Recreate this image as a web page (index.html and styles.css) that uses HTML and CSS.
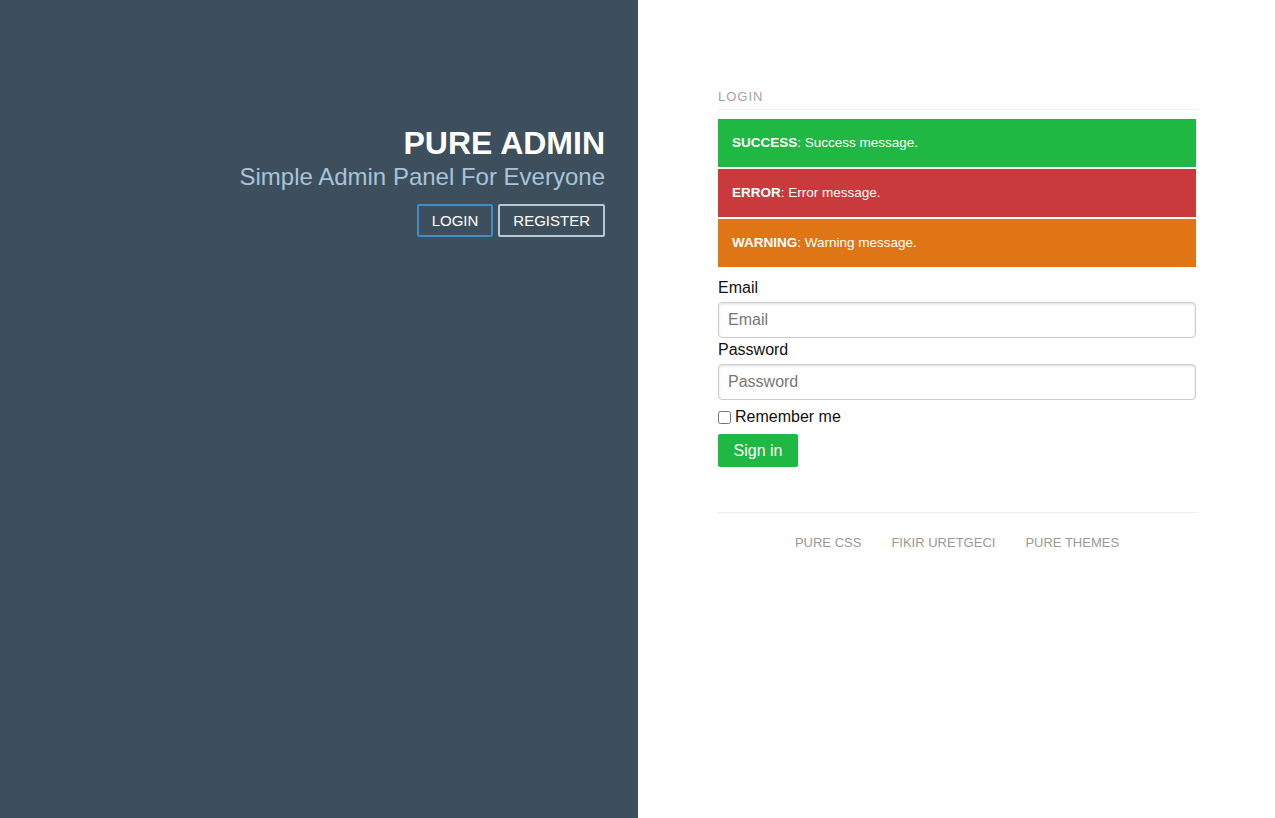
FILE: index.html
```html
<!DOCTYPE html>
<html>
<head>
<meta charset="utf-8">
<title>Pure Admin - Login</title>
<link rel="stylesheet" href="styles.css">
</head>
<body>
<div class="page">
  <div class="side">
    <div class="brand">
      <h1 class="brand-title">PURE ADMIN</h1>
      <h2 class="brand-sub">Simple Admin Panel For Everyone</h2>
      <div class="brand-actions">
        <a class="ghost-btn ghost-login" href="#">LOGIN</a>
        <a class="ghost-btn ghost-register" href="#">REGISTER</a>
      </div>
    </div>
  </div>
  <div class="main">
    <div class="content">
      <div class="section-title">LOGIN</div>
      <div class="alert alert-success"><b>SUCCESS</b>: Success message.</div>
      <div class="alert alert-error"><b>ERROR</b>: Error message.</div>
      <div class="alert alert-warning"><b>WARNING</b>: Warning message.</div>
      <form class="form">
        <label class="field-label" for="email">Email</label>
        <input class="field-input" id="email" type="email" placeholder="Email">
        <label class="field-label" for="password">Password</label>
        <input class="field-input" id="password" type="password" placeholder="Password">
        <label class="check-label"><input class="check" type="checkbox"> Remember me</label>
        <button class="submit-btn" type="button">Sign in</button>
      </form>
      <div class="footer">
        <a class="footer-link" href="#">PURE CSS</a>
        <a class="footer-link" href="#">FIKIR URETGECI</a>
        <a class="footer-link" href="#">PURE THEMES</a>
      </div>
    </div>
  </div>
</div>
</body>
</html>
```

FILE: styles.css
```css
html, body {
  margin: 0;
  padding: 0;
  height: 100%;
}
body {
  font-family: "Liberation Sans", Arial, sans-serif;
  color: #111;
  background: #fff;
}
.page {
  display: flex;
  height: 818px;
}
.side {
  width: 638px;
  flex: none;
  background: #3d4f5d;
  box-sizing: border-box;
  padding: 124px 33px 0 0;
  text-align: right;
}
.brand-title {
  margin: 0;
  font-size: 32px;
  line-height: 38px;
  font-weight: bold;
  color: #fff;
}
.brand-sub {
  margin: 1px 0 0;
  font-size: 24px;
  line-height: 28px;
  font-weight: normal;
  color: #a7c4d8;
}
.brand-actions {
  margin-top: 13px;
  display: flex;
  justify-content: flex-end;
  gap: 5px;
}
.ghost-btn {
  display: block;
  box-sizing: border-box;
  height: 33px;
  line-height: 29px;
  padding: 0 13px;
  border: 2px solid #b9c9d4;
  color: #fff;
  font-size: 15px;
  text-decoration: none;
  border-radius: 2px;
}
.ghost-login {
  border-color: #3f8cc6;
}
.main {
  flex: 1;
  box-sizing: border-box;
  padding: 89px 79px 0 80px;
}
.content {
  width: 478px;
}
.section-title {
  font-size: 13px;
  line-height: 16px;
  letter-spacing: 1px;
  color: #a3a3a3;
  padding-bottom: 4px;
  border-bottom: 1px solid #eee;
  margin-right: -3px;
  margin-bottom: 9px;
}
.alert {
  height: 48px;
  box-sizing: border-box;
  padding: 16px 14px;
  line-height: 16px;
  font-size: 13.5px;
  color: #fff;
  margin-bottom: 2px;
}
.alert b {
  font-weight: bold;
}
.alert-success { background: #1fb843; }
.alert-error { background: #c93a3c; }
.alert-warning { background: #df7515; }
.form {
  display: flex;
  flex-direction: column;
  align-items: flex-start;
  margin-top: 12px;
}
.field-label {
  font-size: 16px;
  line-height: 18px;
  margin-bottom: 5px;
}
.field-input {
  width: 478px;
  height: 36px;
  box-sizing: border-box;
  margin: 0 0 3px;
  padding: 0 9px;
  border: 1px solid #ccc;
  border-radius: 4px;
  box-shadow: inset 0 1px 3px #ddd;
  font-family: "Liberation Sans", Arial, sans-serif;
  font-size: 16px;
  color: #333;
}
.field-input::placeholder {
  color: #777;
}
.check-label {
  display: flex;
  align-items: center;
  font-size: 16px;
  line-height: 18px;
  margin-top: 5px;
}
.check {
  width: 13px;
  height: 13px;
  margin: 0 4px 0 0;
}
.submit-btn {
  margin-top: 8px;
  width: 80px;
  height: 33px;
  border: 0;
  border-radius: 2px;
  background: #1fb843;
  color: #fff;
  font-family: "Liberation Sans", Arial, sans-serif;
  font-size: 16px;
  padding: 0;
}
.footer {
  margin-top: 45px;
  border-top: 1px solid #eee;
  margin-right: -3px;
  padding: 22px 3px 0 0;
  display: flex;
  justify-content: center;
  gap: 30px;
}
.footer-link {
  font-size: 13px;
  line-height: 16px;
  color: #999;
  text-decoration: none;
}
```
